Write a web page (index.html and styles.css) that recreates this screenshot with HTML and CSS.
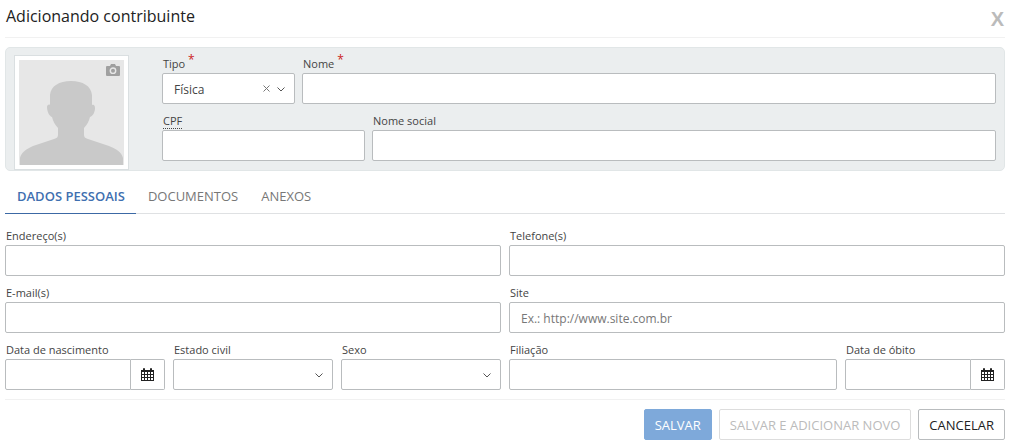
FILE: index.html
```html
<!DOCTYPE html>
<html lang="pt-BR">
<head>
<meta charset="utf-8">
<meta name="viewport" content="width=device-width, initial-scale=1">
<title>Adicionando contribuinte</title>
<link rel="stylesheet" href="styles.css">
</head>
<body>
<form class="dialog">
  <header class="header">
    <h1 class="title">Adicionando contribuinte</h1>
    <button type="button" class="close" aria-label="Fechar">X</button>
  </header>

  <section class="panel">
    <div class="photo">
      <svg class="portrait" viewBox="0 0 105 105" aria-hidden="true">
        <rect width="105" height="105" fill="#e7e7e7"/>
        <path d="M1 105V98C2 93 7 89 14 86L35 79C38 78 39 77 39 75V68C36 65 34 61 33 57C30 56 28 51 28 47C28 45 30 44 31 45V35C32 26 40 21 52 21C64 21 72 26 73 35V45C75 44 76 46 76 48C76 52 74 56 71 57C70 61 68 65 65 68V75C65 77 66 78 69 79L90 86C98 89 103 93 104 98V105Z" fill="#c9c9c9"/>
      </svg>
      <button type="button" class="camera" aria-label="Alterar foto">
        <svg viewBox="0 0 14 12" aria-hidden="true">
          <path d="M4 2L5 0H9L10 2H13Q14 2 14 3V11Q14 12 13 12H1Q0 12 0 11V3Q0 2 1 2Z" fill="#a0a0a0"/>
          <circle cx="7" cy="6.7" r="2.7" fill="none" stroke="#e7e7e7" stroke-width="1.4"/>
        </svg>
      </button>
    </div>
    <div class="identity">
      <div class="row row-name">
        <div class="field">
          <label for="tipo">Tipo <span class="required">*</span></label>
          <div class="select">
            <select id="tipo" required><option>Física</option></select>
            <button type="button" class="clear" aria-label="Limpar"><svg viewBox="0 0 7 7" aria-hidden="true"><path d="M.5 .5L6.5 6.5M6.5 .5L.5 6.5"/></svg></button>
            <svg class="chevron" viewBox="0 0 8 5" aria-hidden="true"><path d="M.5 .5L4 4L7.5 .5"/></svg>
          </div>
        </div>
        <div class="field">
          <label for="nome">Nome <span class="required">*</span></label>
          <input id="nome" type="text" required>
        </div>
      </div>
      <div class="row row-cpf">
        <div class="field">
          <label for="cpf"><abbr title="Cadastro de Pessoas Físicas">CPF</abbr></label>
          <input id="cpf" type="text">
        </div>
        <div class="field">
          <label for="social">Nome social</label>
          <input id="social" type="text">
        </div>
      </div>
    </div>
  </section>

  <nav class="tabs">
    <button type="button" class="tab active">DADOS PESSOAIS</button>
    <button type="button" class="tab">DOCUMENTOS</button>
    <button type="button" class="tab">ANEXOS</button>
  </nav>

  <section class="details">
    <div class="field half"><label for="endereco">Endereço(s)</label><input id="endereco" type="text"></div>
    <div class="field half"><label for="telefone">Telefone(s)</label><input id="telefone" type="text"></div>
    <div class="field half"><label for="email">E-mail(s)</label><input id="email" type="text"></div>
    <div class="field half"><label for="site">Site</label><input id="site" type="text" placeholder="Ex.: http://www.site.com.br"></div>
    <div class="field">
      <label for="nascimento">Data de nascimento</label>
      <div class="date">
        <input id="nascimento" type="text">
        <button type="button" aria-label="Abrir calendário">
          <svg class="calendar" viewBox="0 0 13 13" aria-hidden="true"><path fill-rule="evenodd" d="M0 2H2V1Q2 0 3 0T4 1V2H9V1Q9 0 10 0T11 1V2H13V13H0ZM1 4V6H3V4ZM4 4V6H6V4ZM7 4V6H9V4ZM10 4V6H12V4ZM1 7V9H3V7ZM4 7V9H6V7ZM7 7V9H9V7ZM10 7V9H12V7ZM1 10V12H3V10ZM4 10V12H6V10ZM7 10V12H9V10ZM10 10V12H12V10Z"/></svg>
        </button>
      </div>
    </div>
    <div class="field">
      <label for="civil">Estado civil</label>
      <div class="select"><select id="civil"><option></option></select><svg class="chevron" viewBox="0 0 8 5" aria-hidden="true"><path d="M.5 .5L4 4L7.5 .5"/></svg></div>
    </div>
    <div class="field">
      <label for="sexo">Sexo</label>
      <div class="select"><select id="sexo"><option></option></select><svg class="chevron" viewBox="0 0 8 5" aria-hidden="true"><path d="M.5 .5L4 4L7.5 .5"/></svg></div>
    </div>
    <div class="field double"><label for="filiacao">Filiação</label><input id="filiacao" type="text"></div>
    <div class="field">
      <label for="obito">Data de óbito</label>
      <div class="date">
        <input id="obito" type="text">
        <button type="button" aria-label="Abrir calendário">
          <svg class="calendar" viewBox="0 0 13 13" aria-hidden="true"><path fill-rule="evenodd" d="M0 2H2V1Q2 0 3 0T4 1V2H9V1Q9 0 10 0T11 1V2H13V13H0ZM1 4V6H3V4ZM4 4V6H6V4ZM7 4V6H9V4ZM10 4V6H12V4ZM1 7V9H3V7ZM4 7V9H6V7ZM7 7V9H9V7ZM10 7V9H12V7ZM1 10V12H3V10ZM4 10V12H6V10ZM7 10V12H9V10ZM10 10V12H12V10Z"/></svg>
        </button>
      </div>
    </div>
  </section>

  <footer class="footer">
    <button type="submit" class="button primary">SALVAR</button>
    <button type="button" class="button" disabled>SALVAR E ADICIONAR NOVO</button>
    <button type="button" class="button">CANCELAR</button>
  </footer>
</form>
</body>
</html>
```
FILE: styles.css
```css
* { box-sizing: border-box; }

body {
  margin: 0;
  background: #fff;
  color: #444;
  font-family: "Open Sans", "Noto Sans", sans-serif;
  font-size: 11px;
}

button, input, select { font: inherit; color: inherit; }
button { margin: 0; padding: 0; border: 0; background: none; cursor: pointer; }

.dialog { padding: 0 7px 0 5px; }

.header {
  display: flex;
  justify-content: space-between;
  height: 38px;
  border-bottom: 1px solid #f1f1f1;
}

.title {
  margin: 0;
  padding-left: 1px;
  color: #222;
  font-size: 16px;
  font-weight: 400;
  line-height: 32px;
}

.close {
  padding: 2px 1px 0 0;
  color: #bbb;
  font-family: "Liberation Sans", sans-serif;
  font-size: 20px;
  font-weight: 700;
}

.panel {
  display: flex;
  gap: 33px;
  margin-top: 9px;
  padding: 7px 8px 0;
  border: 1px solid #e1e6e7;
  border-radius: 5px;
  background: #ebeeef;
}

.photo {
  position: relative;
  flex: none;
  padding: 4px;
  border: 1px solid #dadfe1;
  background: #fff;
}

.portrait { display: block; width: 105px; height: 105px; }
.camera { position: absolute; top: 8px; right: 8px; }
.camera svg { display: block; width: 14px; height: 12px; }

.identity { flex: 1; min-width: 0; }
.row { display: grid; gap: 7px; margin-bottom: 8px; }
.row-name { grid-template-columns: 133px 1fr; }
.row-cpf { grid-template-columns: 203px 1fr; }

.field { min-width: 0; }
.field label {
  display: block;
  height: 18px;
  padding-left: 1px;
  line-height: 18px;
  white-space: nowrap;
}
abbr { text-decoration: none; border-bottom: 1px dotted #444; }
.required { color: #c22; font-size: 12px; line-height: 10px; vertical-align: 4px; }

input, select {
  display: block;
  width: 100%;
  height: 31px;
  padding: 2px 11px 0;
  border: 1px solid #b9bcbe;
  border-radius: 2px;
  background: #fff;
  font-size: 12px;
}

select { appearance: none; }
input::placeholder { color: #777; opacity: 1; }

.select { position: relative; }
.select svg { display: block; fill: none; stroke: #555; }
.chevron { position: absolute; top: 14px; right: 10px; width: 8px; height: 5px; pointer-events: none; }
.clear { position: absolute; top: 12px; right: 25px; }
.clear svg { width: 7px; height: 7px; stroke: #777; }

.date { display: flex; }
.date input { flex: 1; min-width: 0; border-radius: 2px 0 0 2px; }
.date button {
  display: grid;
  place-items: center;
  width: 34px;
  border: 1px solid #b9bcbe;
  border-left: 0;
  border-radius: 0 2px 2px 0;
}
.calendar { width: 13px; height: 13px; fill: #222; }

.tabs {
  display: flex;
  margin-top: 9px;
  border-bottom: 1px solid #dfe1e3;
}

.tab {
  height: 34px;
  margin-bottom: -1px;
  padding: 0 11px 2px 12px;
  border-bottom: 1px solid transparent;
  color: #777;
  font-size: 13px;
}
.tab.active { border-color: #3c69a5; color: #3f6fb0; font-weight: 600; }

.details {
  display: grid;
  grid-template-columns: repeat(6, 1fr);
  gap: 8px;
  margin-top: 13px;
}
.half { grid-column: span 3; }
.double { grid-column: span 2; }

.footer {
  display: flex;
  justify-content: flex-end;
  gap: 7px;
  margin-top: 9px;
  padding-top: 9px;
  border-top: 1px solid #f1f1f1;
}

.button {
  height: 31px;
  padding: 0 10px;
  border: 1px solid #b9bcbe;
  border-radius: 2px;
  background: #fff;
  color: #222;
  font-size: 13px;
}
.button:disabled { border-color: #ddd; color: #bbb; }
.primary { border-color: #7ea9da; background: #7ea9da; color: #fff; }
```
